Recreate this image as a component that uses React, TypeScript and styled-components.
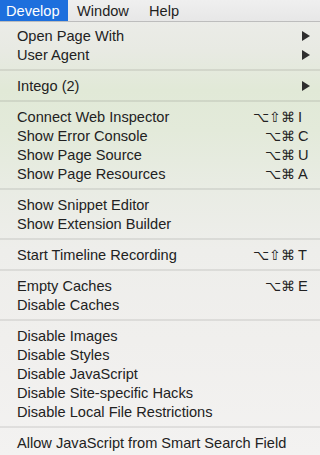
import React from "react";
import styled, { createGlobalStyle } from "styled-components";

const Global = createGlobalStyle`
  html, body { margin: 0; padding: 0; }
  body {
    width: 320px;
    height: 455px;
    overflow: hidden;
    font-family: "Liberation Sans", Arial, sans-serif;
  }
`;

const Screen = styled.div`
  width: 320px;
  height: 455px;
  display: flex;
  flex-direction: column;
  background: linear-gradient(
    180deg,
    #ededeb 0px,
    #e8eae3 50px,
    #e1e9d7 90px,
    #e3eada 130px,
    #e9ece4 190px,
    #eeeeeb 250px,
    #f0efed 340px,
    #f3f2f1 455px
  );
  color: #222;
`;

const MenuBar = styled.div`
  height: 22px;
  display: flex;
  align-items: stretch;
  background: linear-gradient(180deg, #efefef 0%, #e7e7e7 100%);
  border-bottom: 1px solid #bdbdbd;
  box-sizing: border-box;
  flex-shrink: 0;
`;

const BarItem = styled.div<{ $active?: boolean; $w: number; $pad: number }>`
  width: ${(p) => p.$w}px;
  display: flex;
  align-items: center;
  padding-left: ${(p) => p.$pad}px;
  box-sizing: border-box;
  font-size: 14.6px;
  color: ${(p) => (p.$active ? "#ffffff" : "#1e1e1e")};
  background: ${(p) => (p.$active ? "#1d6fdd" : "transparent")};
`;

const Menu = styled.div`
  display: flex;
  flex-direction: column;
  padding-top: 4px;
`;

const Item = styled.div`
  height: 19px;
  display: flex;
  align-items: center;
  padding: 0 10px 0 17px;
  font-size: 14.6px;
  color: #222;
`;

const Label = styled.span`
  flex: 1;
  white-space: nowrap;
`;

const Shortcut = styled.span`
  display: flex;
  align-items: center;
  white-space: nowrap;
  color: #222;
`;

const Mods = styled.span`
  font-size: 14px;
  letter-spacing: 0;
`;

const Key = styled.span`
  width: 12px;
  margin-left: 3px;
  text-align: left;
`;

const Arrow = styled.span`
  width: 0;
  height: 0;
  border-top: 5px solid transparent;
  border-bottom: 5px solid transparent;
  border-left: 8px solid #2e2e2e;
`;

const Separator = styled.div`
  height: 12px;
  display: flex;
  align-items: center;
  &::before {
    content: "";
    flex: 1;
    height: 2px;
    background: rgba(0, 0, 0, 0.08);
  }
`;

type Entry =
  | { sep: true }
  | { label: string; sub?: boolean; mods?: string; key?: string };

const entries: Entry[] = [
  { label: "Open Page With", sub: true },
  { label: "User Agent", sub: true },
  { sep: true },
  { label: "Intego (2)", sub: true },
  { sep: true },
  { label: "Connect Web Inspector", mods: "⌥⇧⌘", key: "I" },
  { label: "Show Error Console", mods: "⌥⌘", key: "C" },
  { label: "Show Page Source", mods: "⌥⌘", key: "U" },
  { label: "Show Page Resources", mods: "⌥⌘", key: "A" },
  { sep: true },
  { label: "Show Snippet Editor" },
  { label: "Show Extension Builder" },
  { sep: true },
  { label: "Start Timeline Recording", mods: "⌥⇧⌘", key: "T" },
  { sep: true },
  { label: "Empty Caches", mods: "⌥⌘", key: "E" },
  { label: "Disable Caches" },
  { sep: true },
  { label: "Disable Images" },
  { label: "Disable Styles" },
  { label: "Disable JavaScript" },
  { label: "Disable Site-specific Hacks" },
  { label: "Disable Local File Restrictions" },
  { sep: true },
  { label: "Allow JavaScript from Smart Search Field" },
];

export default function App() {
  return (
    <>
      <Global />
      <Screen>
        <MenuBar>
          <BarItem $active $w={68} $pad={6}>Develop</BarItem>
          <BarItem $w={72} $pad={9}>Window</BarItem>
          <BarItem $w={60} $pad={9}>Help</BarItem>
        </MenuBar>
        <Menu>
          {entries.map((e, i) =>
            "sep" in e ? (
              <Separator key={i} />
            ) : (
              <Item key={i}>
                <Label>{e.label}</Label>
                {e.sub && <Arrow />}
                {e.key && (
                  <Shortcut>
                    <Mods>{e.mods}</Mods>
                    <Key>{e.key}</Key>
                  </Shortcut>
                )}
              </Item>
            )
          )}
        </Menu>
      </Screen>
    </>
  );
}
